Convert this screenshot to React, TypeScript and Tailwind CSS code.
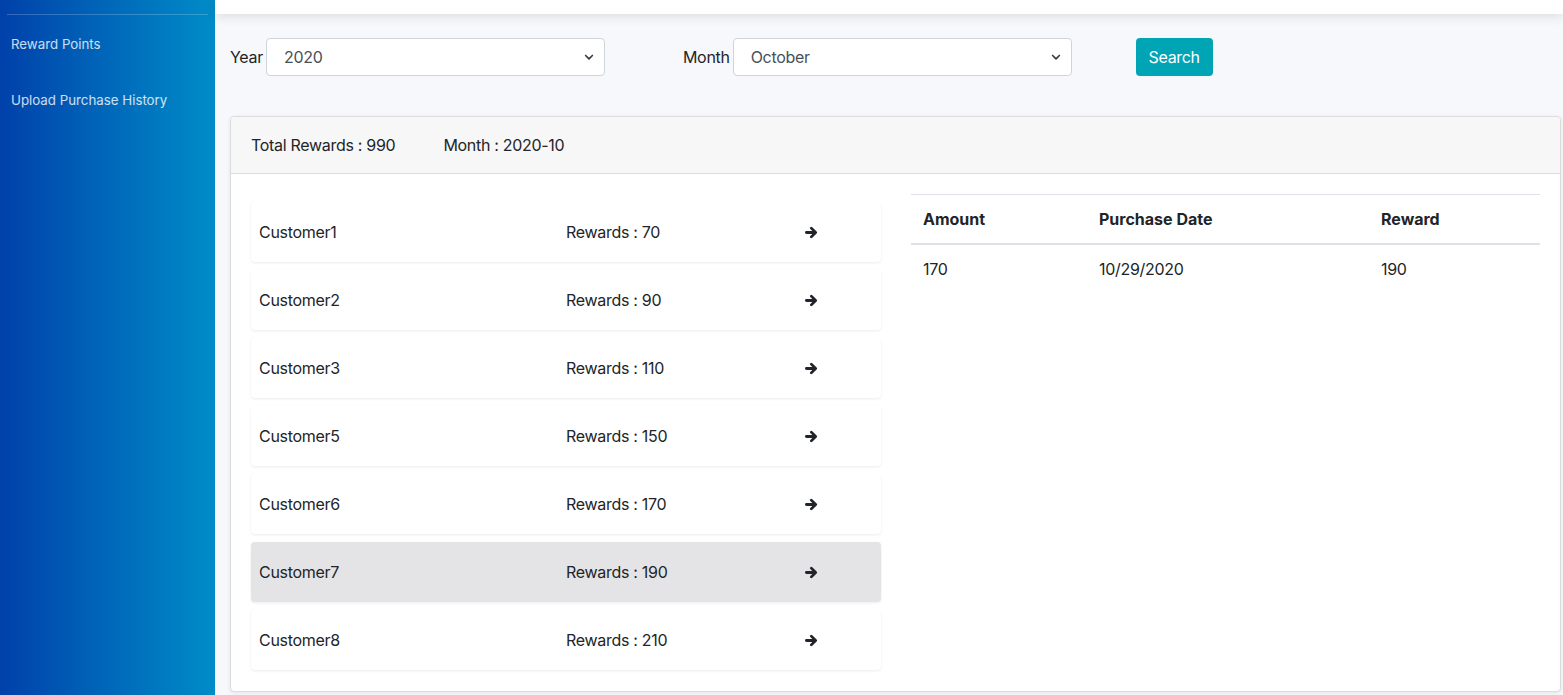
const customers = [
  { name: "Customer1", rewards: 70 },
  { name: "Customer2", rewards: 90 },
  { name: "Customer3", rewards: 110 },
  { name: "Customer5", rewards: 150 },
  { name: "Customer6", rewards: 170 },
  { name: "Customer7", rewards: 190, active: true },
  { name: "Customer8", rewards: 210 },
];

const Chevron = () => (
  <svg width="12" height="12" viewBox="0 0 16 16" className="absolute right-[10px] top-1/2 -translate-y-1/2">
    <path d="M3.5 6l4.5 4.5 4.5-4.5" fill="none" stroke="#343a40" strokeWidth="2.2" strokeLinecap="round" strokeLinejoin="round" />
  </svg>
);

const Arrow = () => (
  <svg width="13" height="13" viewBox="0 0 14 14">
    <path d="M1.5 7h9M6.8 2.3L11.5 7 6.8 11.7" fill="none" stroke="#212529" strokeWidth="3" strokeLinecap="round" strokeLinejoin="round" />
  </svg>
);

export default function App() {
  return (
    <div className="flex h-[695px] overflow-hidden text-[#212529]" style={{ fontFamily: "Inter, 'Noto Sans', sans-serif" }}>
      <aside className="w-[215px] shrink-0 bg-gradient-to-r from-[#0040aa] to-[#008cc8] px-[7px]">
        <div className="mt-[14px] border-t border-white/20" />
        <nav className="text-[13.3px] text-white/80">
          <div className="pl-1 pt-[21px] leading-[16px]">Reward Points</div>
          <div className="pl-1 pt-[40px] leading-[16px]">Upload Purchase History</div>
        </nav>
      </aside>

      <main className="flex-1 bg-[#f7f8fc] flex flex-col">
        <div className="h-[14px] bg-white shadow-[0_2px_12px_rgba(0,0,0,0.12)] relative z-10" />

        <div className="flex items-center pl-[15px] pt-[24px] text-[16px] tracking-[-0.3px]">
          <label className="mr-[3px]">Year</label>
          <div className="relative w-[339px]">
            <div className="h-[38px] rounded-[4px] border border-[#ced4da] bg-white pl-[17px] flex items-center text-[#495057]">2020</div>
            <Chevron />
          </div>
          <label className="ml-[78px] mr-[3px]">Month</label>
          <div className="relative w-[339px]">
            <div className="h-[38px] rounded-[4px] border border-[#ced4da] bg-white pl-[17px] flex items-center text-[#495057]">October</div>
            <Chevron />
          </div>
          <button className="ml-[64px] h-[38px] w-[77px] rounded-[4px] bg-[#00a5b5] text-white text-[16px]">Search</button>
        </div>

        <div className="ml-[15px] mr-[2px] mt-[40px] rounded-[4px] border border-[#dcdcdc] bg-white shadow-[0_1px_4px_rgba(0,0,0,0.08)] flex-1 mb-[3px]">
          <div className="h-[57px] bg-[#f7f7f7] border-b border-[#dcdcdc] flex items-center pl-[20px] text-[16px] tracking-[-0.3px] rounded-t-[4px]">
            <span>Total Rewards : 990</span>
            <span className="ml-[48px]">Month : 2020-10</span>
          </div>
          <div className="flex gap-[30px] px-[20px] pt-[20px]">
            <div className="w-[630px] shrink-0 pt-[8px] flex flex-col gap-[8px]">
              {customers.map((c) => (
                <div
                  key={c.name}
                  className={`h-[60px] rounded-[4px] flex items-center text-[16px] tracking-[-0.3px] shadow-[0_1px_3px_rgba(0,0,0,0.08)] ${c.active ? "bg-[#e4e4e6]" : "bg-white"}`}
                >
                  <div className="w-[315px] pl-[8px]">{c.name}</div>
                  <div className="w-[239px]">Rewards : {c.rewards}</div>
                  <Arrow />
                </div>
              ))}
            </div>
            <div className="flex-1">
              <table className="w-full text-[16px] border-collapse">
                <thead>
                  <tr className="border-t border-[#dee2e6] border-b-2 border-b-[#dee2e6]">
                    <th className="text-left font-bold px-[12px] h-[49px] w-[176px]">Amount</th>
                    <th className="text-left font-bold px-[12px] w-[282px]">Purchase Date</th>
                    <th className="text-left font-bold px-[12px]">Reward</th>
                  </tr>
                </thead>
                <tbody className="tracking-[-0.3px]">
                  <tr>
                    <td className="px-[12px] h-[49px]">170</td>
                    <td className="px-[12px]">10/29/2020</td>
                    <td className="px-[12px]">190</td>
                  </tr>
                </tbody>
              </table>
            </div>
          </div>
        </div>
      </main>
    </div>
  );
}
